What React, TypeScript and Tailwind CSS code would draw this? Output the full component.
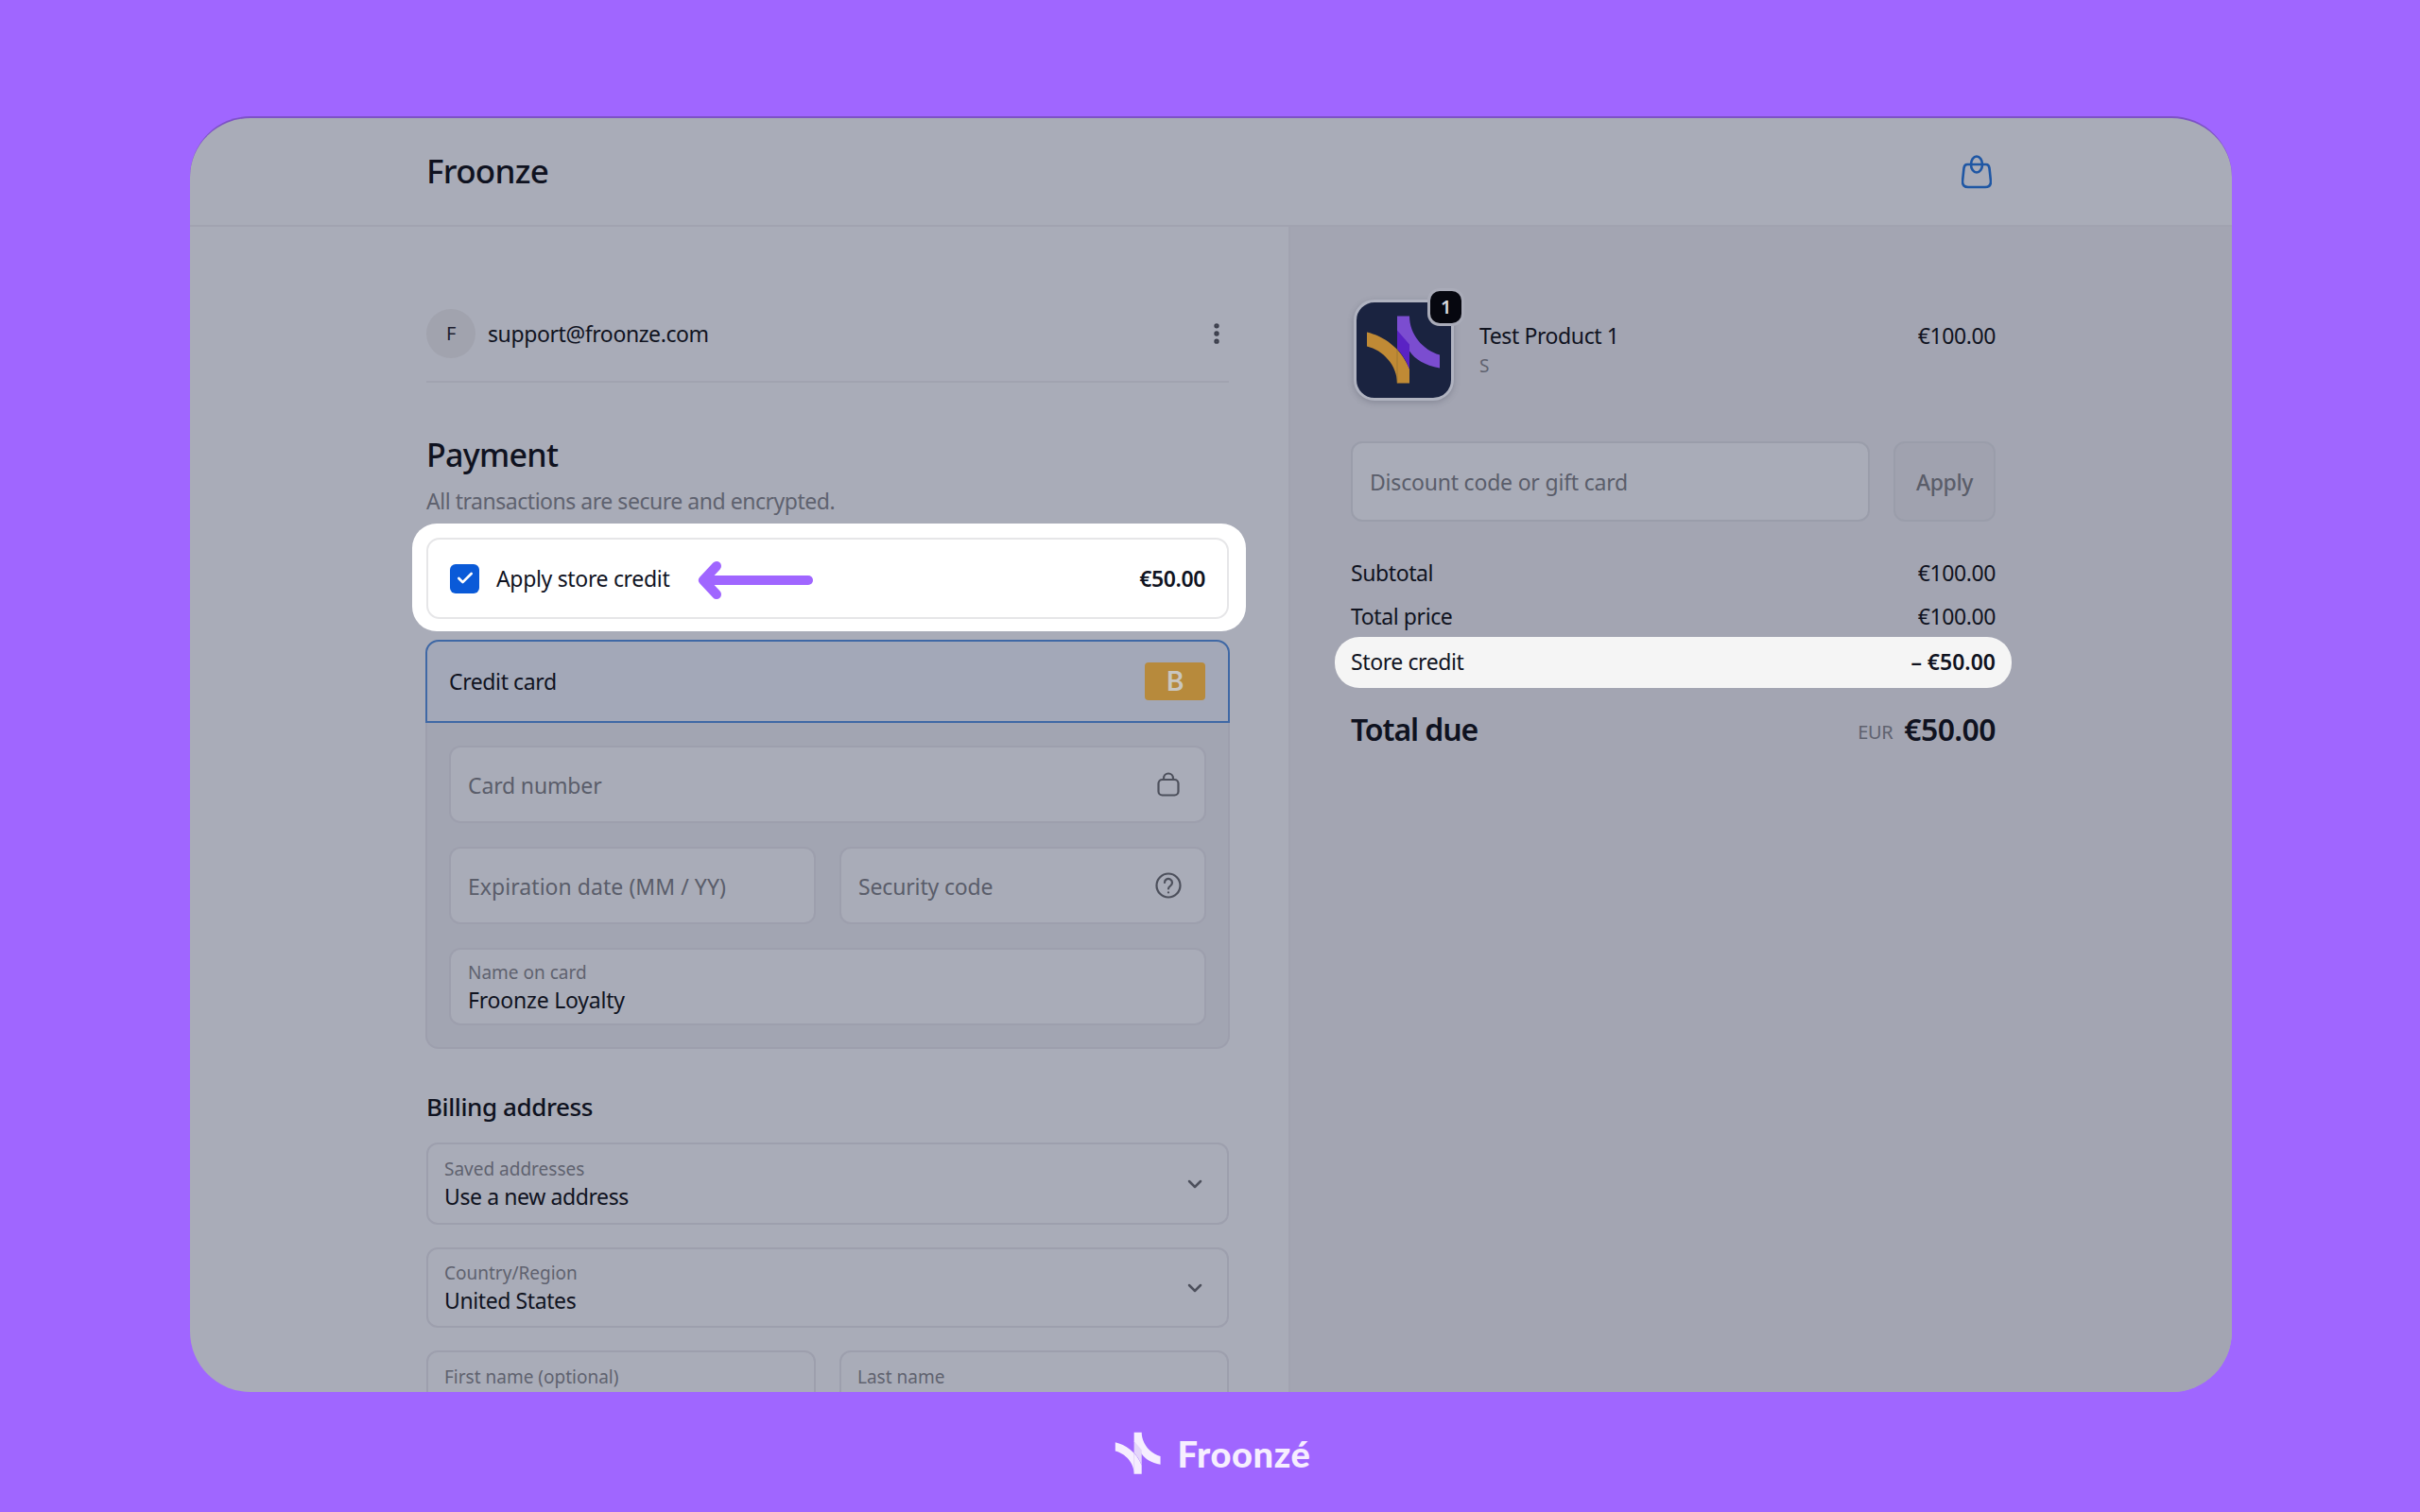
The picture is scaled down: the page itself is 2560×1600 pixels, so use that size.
import { ChevronDown, Check, EllipsisVertical } from 'lucide-react';

function Mark({ className, light = false }: { className?: string; light?: boolean }) {
  return (
    <svg viewBox="0 0 100 100" className={className}>
      <path
        d="M11 31C28 35 47 47 56 70V85H43C43 66 28 50 11 46Z"
        fill={light ? '#f6eeff' : '#c08a35'}
      />
      <path
        d="M43 14H56C56 33 70 50 88 55V69C72 66 62 60 56 51L43 30Z"
        fill={light ? '#f6eeff' : '#7b4dd0'}
      />
      <path
        d="M43 29L56 44V70C52 60 48 54 43 49Z"
        fill={light ? '#e4d6fa' : '#5a22c4'}
      />
      <path d="M43 49V85" stroke={light ? '#c9b4ee' : '#8a6b30'} strokeWidth="0.6" />
    </svg>
  );
}

function Field({
  label,
  value,
  icon,
  valueClass = 'tracking-[-0.15px]',
}: {
  label?: string;
  value?: string;
  icon?: React.ReactNode;
  valueClass?: string;
}) {
  return (
    <div className="flex h-[82px] w-full min-w-0 items-center justify-between rounded-[12px] border-2 border-[#9d9fad] bg-[#a9acb8] pl-[18px] pr-[26px]">
      {label ? (
        <div className="mt-[2px] flex flex-col">
          <span className="text-[19px] leading-[26px] tracking-[0px] text-[#5f626f]">{label}</span>
          <span className="text-[23px] leading-[32px] tracking-[-0.2px] text-[#10131f]">{value}</span>
        </div>
      ) : (
        <span className={`mt-[2px] text-[23px] text-[#5a5d6a] ${valueClass}`}>{value}</span>
      )}
      {icon}
    </div>
  );
}

function SelectBox({ label, value, h }: { label: string; value: string; h: string }) {
  return (
    <div className={`flex items-center justify-between rounded-[12px] border-2 border-[#9d9fad] pl-[17px] pr-[22px] ${h}`}>
      <div className="mt-[1px] flex flex-col">
        <span className="text-[19px] leading-[26px] tracking-[0px] text-[#5f626f]">{label}</span>
        <span className="text-[23px] leading-[32px] text-[#10131f]">{value}</span>
      </div>
      <ChevronDown size={24} strokeWidth={2.5} className="text-[#4d505c]" />
    </div>
  );
}

function SummaryRow({ label, value }: { label: string; value: string }) {
  return (
    <div className="flex h-[30px] items-center justify-between text-[23px] text-[#10131f]">
      <span>{label}</span>
      <span>{value}</span>
    </div>
  );
}

export default function App() {
  return (
    <div className="flex h-[1600px] w-[2560px] flex-col items-center overflow-hidden bg-[#a066ff] pt-[123px] font-['Noto_Sans',sans-serif] tracking-[-0.4px]">
      <div className="ml-[2px] flex h-[1350px] w-[2160px] shrink-0 flex-col overflow-hidden rounded-[64px] border-t-2 border-[#7d52c6] bg-[#a9acb8]">
        <header className="flex h-[115px] shrink-0 items-center justify-between border-b-2 border-[#a1a3b0] pl-[250px] pr-[254px]">
          <span className="text-[35px] font-medium tracking-[-0.7px] text-[#0f1220]">Froonze</span>
          <svg viewBox="0 0 32 36" className="h-[36px] w-[32px]" fill="none" stroke="#1f57a4" strokeWidth="2.6">
            <path d="M6 10H26Q29 10 29.5 14L31 28Q31 34 25 34H7Q1 34 1 28L2.500 14Q3 10 6 10Z" />
            <ellipse cx="16" cy="10" rx="6" ry="8.500" />
          </svg>
        </header>

        <div className="flex min-h-0 flex-1">
          {/* checkout form */}
          <div className="w-[1164px] shrink-0 border-r-2 border-[#a1a3b0] pl-[250px] pt-[77px]">
            <div className="w-[849px]">
              <div className="flex h-[88px] items-start justify-between border-b-2 border-[#a1a3b0]">
                <div className="flex h-[72px] items-center gap-[13px]">
                  <span className="flex h-[52px] w-[52px] items-center justify-center rounded-full bg-[#a1a3ae] text-[20px] text-[#1e2130]">F</span>
                  <span className="text-[23px] text-[#10131f]">support@froonze.com</span>
                </div>
                <div className="-mr-[1px] flex h-[72px] items-center">
                  <EllipsisVertical size={28} strokeWidth={2.6} className="text-[#3c3f4c]" />
                </div>
              </div>

              <h2 className="mt-[53px] flex h-[46px] items-center text-[34px] font-medium tracking-[-0.7px] text-[#0f1220]">Payment</h2>
              <p className="mt-[10px] flex h-[32px] items-center text-[23px] tracking-[-0.47px] text-[#5f626f]">All transactions are secure and encrypted.</p>

              <div className="-ml-[15px] -mr-[18px] mt-[8px] rounded-[26px] bg-white pb-[13px] pl-[15px] pr-[18px] pt-[15px]">
                <div className="flex h-[86px] items-center justify-between rounded-[14px] border-2 border-[#e6e6e8] bg-white pl-[23px] pr-[23px]">
                  <div className="flex items-center">
                    <span className="flex h-[31px] w-[31px] items-center justify-center rounded-[6px] bg-[#0a5ad8]">
                      <Check size={20} strokeWidth={3.2} className="text-white" />
                    </span>
                    <span className="ml-[18px] text-[23px] tracking-[-0.33px] text-[#10131f]">Apply store credit</span>
                    <svg viewBox="0 0 122 40" className="ml-[30px] mt-[3px] h-[40px] w-[122px]" fill="none" stroke="#a066ff" strokeLinecap="round" strokeLinejoin="round">
                      <path d="M117 20H8" strokeWidth="10" />
                      <path d="M20 5L6 20L20 35" strokeWidth="10" />
                    </svg>
                  </div>
                  <span className="text-[23px] font-semibold text-[#10131f]">€50.00</span>
                </div>
              </div>

              <div className="-mx-[1px] mt-[9px] flex h-[88px] items-center justify-between rounded-t-[14px] border-2 border-[#3f68a5] bg-[#a3a8b8] pl-[23px] pr-[24px]">
                <span className="text-[23px] text-[#10131f]">Credit card</span>
                <span className="flex h-[40px] w-[64px] items-center justify-center rounded-[4px] bg-[#b78a3c] font-['Inter',sans-serif] text-[28px] font-semibold text-[#c9c6c0]">B</span>
              </div>
              <div className="-mx-[1px] flex flex-col gap-[25px] rounded-b-[14px] border-2 border-t-0 border-[#9d9fad] bg-[#a2a5b2] px-[23px] pb-[23px] pt-[24px]">
                <Field
                  value="Card number"
                  icon={
                    <svg viewBox="0 0 24 26" className="h-[26px] w-[24px]" fill="none" stroke="#4d505c" strokeWidth="2.200">
                      <rect x="1.500" y="8" width="21" height="16.500" rx="4" />
                      <path d="M7 8V6.500a5 5 0 0 1 10 0V8" />
                    </svg>
                  }
                />
                <div className="flex gap-[25px]">
                  <Field value="Expiration date (MM / YY)" valueClass="tracking-[0.05px]" />
                  <Field
                    value="Security code"
                    icon={
                      <svg viewBox="0 0 28 28" className="-mr-[2px] h-[28px] w-[28px]" fill="none" stroke="#4d505c" strokeWidth="2.200" strokeLinecap="round">
                        <circle cx="14" cy="14" r="12.500" />
                        <path d="M10 11a4 4 0 1 1 6.200 3.300c-1.400.9-2.200 1.700-2.200 3.200" />
                        <path d="M14 21.300v.2" />
                      </svg>
                    }
                  />
                </div>
                <Field label="Name on card" value="Froonze Loyalty" />
              </div>

              <h3 className="mt-[43px] flex h-[36px] items-center text-[26px] font-medium text-[#0f1220]">Billing address</h3>
              <div className="mt-[20px] flex flex-col gap-[24px]">
                <SelectBox label="Saved addresses" value="Use a new address" h="h-[87px]" />
                <SelectBox label="Country/Region" value="United States" h="h-[85px]" />
                <div className="flex gap-[25px]">
                  <div className="h-[85px] flex-1 rounded-[12px] border-2 border-[#9d9fad] pl-[17px] pt-[13px] text-[19px] leading-[26px] tracking-[0px] text-[#5f626f]">First name (optional)</div>
                  <div className="h-[85px] flex-1 rounded-[12px] border-2 border-[#9d9fad] pl-[17px] pt-[13px] text-[19px] leading-[26px] tracking-[0px] text-[#5f626f]">Last name</div>
                </div>
              </div>
            </div>
          </div>

          {/* order summary */}
          <div className="flex-1 bg-[#a3a5b2] pl-[64px] pt-[77px]">
            <div className="w-[682px]">
              <div className="flex h-[107px] items-start justify-between">
                <div className="flex items-start">
                  <div className="relative ml-[3px] h-[107px] w-[106px] rounded-[22px] border-[3px] border-[#b0b3c0] bg-[#1a2340] shadow-[0_2px_6px_rgba(70,72,90,0.3)]">
                    <Mark className="h-full w-full" />
                    <span className="absolute -right-[11px] -top-[12px] flex h-[34px] w-[33px] items-center justify-center rounded-[10px] bg-[#06070f] text-[20px] font-semibold text-[#d8d9de] ring-[3px] ring-[#a9abb8]">1</span>
                  </div>
                  <div className="ml-[27px] flex flex-col">
                    <span className="mt-[22px] text-[23px] leading-[32px] text-[#10131f]">Test Product 1</span>
                    <span className="mt-[1px] text-[19px] leading-[30px] text-[#5f626f]">S</span>
                  </div>
                </div>
                <span className="mt-[22px] text-[23px] leading-[32px] text-[#10131f]">€100.00</span>
              </div>

              <div className="mt-[43px] flex gap-[25px]">
                <div className="flex h-[85px] flex-1 items-center rounded-[12px] border-2 border-[#9a9daa] bg-[#a9acb8] pl-[18px] text-[23px] tracking-[-0.2px] text-[#5a5d6a]">
                  <span className="mt-[1px]">Discount code or gift card</span>
                </div>
                <div className="flex h-[85px] w-[108px] items-center justify-center rounded-[12px] border-2 border-[#9a9daa] bg-[#a0a2af] text-[23px] font-medium text-[#5a5d69]">
                  <span className="mt-[1px]">Apply</span>
                </div>
              </div>

              <div className="mt-[39px]">
                <SummaryRow label="Subtotal" value="€100.00" />
              </div>
              <div className="mt-[16px]">
                <SummaryRow label="Total price" value="€100.00" />
              </div>
              <div className="-mx-[17px] mt-[7px] flex h-[54px] items-center justify-between rounded-[26px] bg-[#f5f5f5] px-[17px] text-[23px] text-[#10131f]">
                <span className="-mt-[1px]">Store credit</span>
                <span className="-mt-[1px] font-semibold tracking-[0px]">– €50.00</span>
              </div>
              <div className="mt-[22px] flex h-[44px] items-center justify-between">
                <span className="text-[32px] font-semibold tracking-[-1.1px] text-[#0f1220]">Total due</span>
                <div className="flex items-center gap-[12px]">
                  <span className="mt-[6px] text-[20px] text-[#5f626f]">EUR</span>
                  <span className="text-[32px] font-semibold tracking-[-0.6px] text-[#0f1220]">€50.00</span>
                </div>
              </div>
            </div>
          </div>
        </div>
      </div>

      <div className="mt-[34px] flex items-center gap-[10px]">
        <Mark light className="h-[62px] w-[62px]" />
        <span className="font-['Lato',sans-serif] text-[38px] font-black leading-none tracking-[0.6px] text-[#f6eeff]">Froonzé</span>
      </div>
    </div>
  );
}
